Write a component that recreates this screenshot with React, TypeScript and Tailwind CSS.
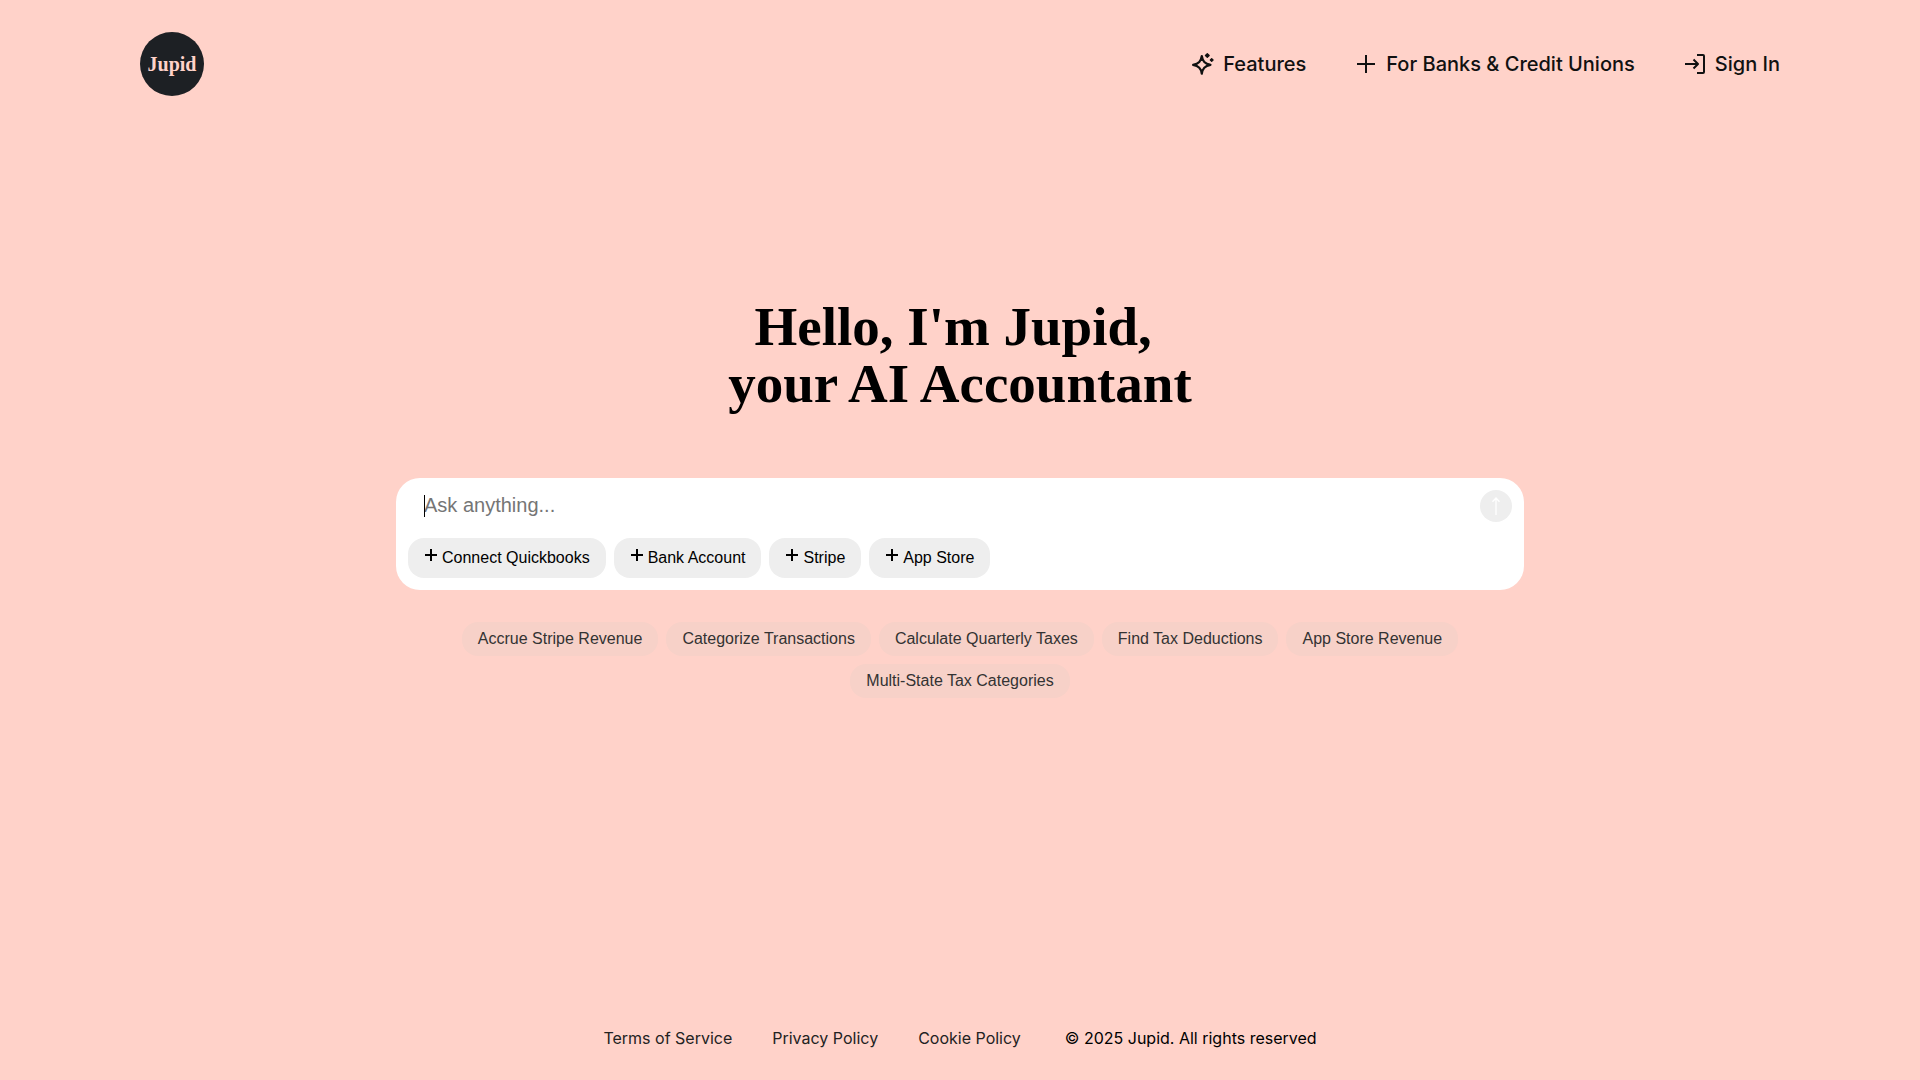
import { useState } from 'react';

const integrations = ['Connect Quickbooks', 'Bank Account', 'Stripe', 'App Store'];

const suggestions = [
  'Accrue Stripe Revenue',
  'Categorize Transactions',
  'Calculate Quarterly Taxes',
  'Find Tax Deductions',
  'App Store Revenue',
  'Multi-State Tax Categories',
];

const footerLinks = ['Terms of Service', 'Privacy Policy', 'Cookie Policy'];

function SparkleIcon() {
  return (
    <svg width="24" height="24" viewBox="0 0 24 24" fill="none" stroke="currentColor" strokeWidth="2.200" strokeLinejoin="round" aria-hidden="true">
      <path d="M10.800 4c.9 5.400 2.900 7.700 8.700 8.900-5.800 1.300-7.800 3.500-8.700 8.800-.9-5.300-2.900-7.500-8.700-8.800 5.800-1.200 7.800-3.500 8.700-8.900Z" />
      <path d="M16.300 1.600 18.200 3.500 16.300 5.400 14.400 3.500ZM20.700 6.600 22.100 8 20.700 9.400 19.300 8Z" fill="currentColor" strokeWidth="1.200" />
    </svg>
  );
}

function PlusIcon() {
  return (
    <svg width="24" height="24" viewBox="0 0 24 24" fill="none" stroke="currentColor" strokeWidth="2" aria-hidden="true">
      <path d="M12 3v18M3 12h18" />
    </svg>
  );
}

function SignInIcon() {
  return (
    <svg width="24" height="24" viewBox="0 0 24 24" fill="none" stroke="currentColor" strokeWidth="2" strokeLinejoin="round" aria-hidden="true">
      <path d="M14 3h6a1 1 0 0 1 1 1v16a1 1 0 0 1-1 1h-6" />
      <path d="M2 12h13M10.500 7.500 15 12l-4.500 4.500" />
    </svg>
  );
}

const navItems = [
  { label: 'Features', icon: <SparkleIcon /> },
  { label: 'For Banks & Credit Unions', icon: <PlusIcon /> },
  { label: 'Sign In', icon: <SignInIcon /> },
];

export default function App() {
  const [message, setMessage] = useState('');

  return (
    <div className="flex min-h-screen flex-col bg-[#ffd2c9] font-['Liberation_Sans',Arial,sans-serif] text-black">
      <header className="flex items-center justify-between px-[140px] py-8">
        <a
          href="#"
          className="flex size-16 items-center justify-center rounded-full bg-[#1d2024] font-['Liberation_Serif',serif] text-xl font-bold text-[#ffd2c9]"
        >
          Jupid
        </a>
        <nav className="flex items-center gap-12 font-['Inter',sans-serif] text-xl font-medium text-[#111]">
          {navItems.map((item) => (
            <a key={item.label} href="#" className="flex items-center gap-2">
              {item.icon}
              {item.label}
            </a>
          ))}
        </nav>
      </header>

      <main className="flex flex-1 flex-col items-center px-8 pt-[170px]">
        <h1 className="text-center font-['Liberation_Serif',serif] text-[55px] leading-[57px] font-bold">
          Hello, I'm Jupid,&nbsp;
          <br />
          your AI Accountant
        </h1>

        <form
          className="mt-[66px] w-full max-w-[1128px] rounded-[24px] bg-white p-3"
          onSubmit={(e) => e.preventDefault()}
        >
          <div className="flex items-center">
            <div className="relative flex-1">
              <input
                type="text"
                aria-label="Ask anything"
                placeholder="Ask anything..."
                value={message}
                onChange={(e) => setMessage(e.target.value)}
                className="block h-8 w-full px-4 pb-0.5 text-xl caret-transparent outline-none placeholder:text-[#757575]"
              />
              {message === '' && <span className="absolute top-[5px] left-4 h-[22px] w-px bg-black" />}
            </div>
            <button
              type="submit"
              aria-label="Send"
              className="flex size-8 items-center justify-center rounded-full bg-[#eee] text-white"
            >
              <svg width="8" height="18" viewBox="0 0 8 18" fill="none" stroke="currentColor" strokeWidth="1.300" aria-hidden="true">
                <path d="M4 18V1M.5 4.800 4 1l3.500 3.800" />
              </svg>
            </button>
          </div>
          <div className="mt-4 flex flex-wrap gap-2">
            {integrations.map((name) => (
              <button key={name} type="button" className="flex h-10 items-center gap-1 rounded-2xl bg-[#eee] px-4">
                <svg className="mb-1.5" width="14" height="14" viewBox="0 0 14 14" stroke="currentColor" strokeWidth="2" aria-hidden="true">
                  <path d="M7 1v12M1 7h12" />
                </svg>
                {name}
              </button>
            ))}
          </div>
        </form>

        <div className="mt-8 flex w-full max-w-[1128px] flex-wrap justify-center gap-2">
          {suggestions.map((text) => (
            <button key={text} type="button" className="rounded-2xl bg-[#f7d1c8] px-4 py-[5px] text-[#333]">
              {text}
            </button>
          ))}
        </div>
      </main>

      <footer className="flex items-center justify-center gap-10 pb-[30px] font-['Inter',sans-serif]">
        {footerLinks.map((link) => (
          <a key={link} href="#" className="text-[#222]">
            {link}
          </a>
        ))}
        <p className="pl-1">© 2025 Jupid. All rights reserved</p>
      </footer>
    </div>
  );
}
